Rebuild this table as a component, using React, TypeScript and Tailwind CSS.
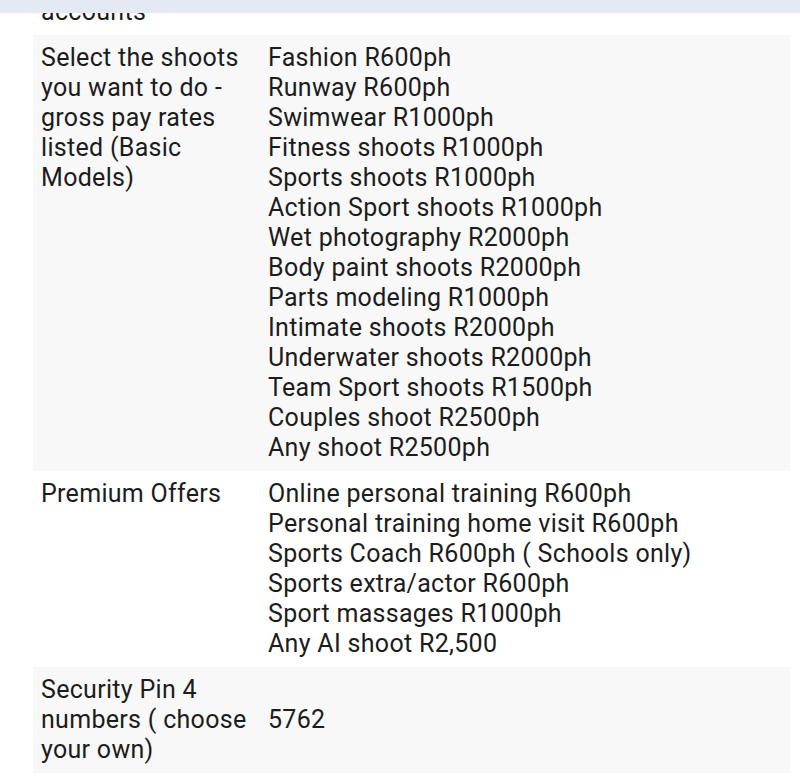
const rows: { label: string; values: string[] }[] = [
  { label: 'accounts', values: [''] },
  {
    label: 'Select the shoots you want to do - gross pay rates listed (Basic Models)',
    values: [
      'Fashion R600ph',
      'Runway R600ph',
      'Swimwear R1000ph',
      'Fitness shoots R1000ph',
      'Sports shoots R1000ph',
      'Action Sport shoots R1000ph',
      'Wet photography R2000ph',
      'Body paint shoots R2000ph',
      'Parts modeling R1000ph',
      'Intimate shoots R2000ph',
      'Underwater shoots R2000ph',
      'Team Sport shoots R1500ph',
      'Couples shoot R2500ph',
      'Any shoot R2500ph',
    ],
  },
  {
    label: 'Premium Offers',
    values: [
      'Online personal training R600ph',
      'Personal training home visit R600ph',
      'Sports Coach R600ph ( Schools only)',
      'Sports extra/actor R600ph',
      'Sport massages R1000ph',
      'Any AI shoot R2,500',
    ],
  },
  { label: 'Security Pin 4 numbers ( choose your own)', values: ['5762'] },
]

export default function App() {
  return (
    <div className="relative min-h-[778px] overflow-hidden bg-white font-['Roboto',sans-serif] text-[25px] leading-[30px] tracking-[0.3px] text-[#1c1c1c]">
      {/* header strip overlapping the scrolled content */}
      <div className="absolute left-0 right-0 top-0 z-10 h-[13px] bg-[#e5e9f3]" />

      <div className="mt-[-11px] pl-[33px] pr-[10px]">
        <table className="w-full border-collapse">
          <colgroup>
            <col className="w-[227px]" />
            <col />
          </colgroup>
          <tbody>
            {rows.map((row, i) => (
              <tr key={i} className={i % 2 === 1 ? 'bg-[#f8f8f8]' : 'bg-white'}>
                <td className="px-2 py-2 align-top">{row.label}</td>
                <td className="px-2 py-2 align-middle">
                  {row.values.map((v, j) => (
                    <div key={j}>{v || '\u00a0'}</div>
                  ))}
                </td>
              </tr>
            ))}
          </tbody>
        </table>
      </div>
    </div>
  )
}
